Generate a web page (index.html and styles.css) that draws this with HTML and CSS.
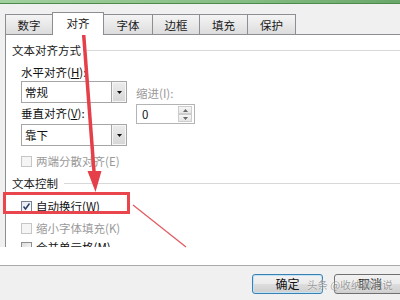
FILE: index.html
```html
<!DOCTYPE html>
<html lang="zh-CN">
<head>
<meta charset="utf-8">
<title>设置单元格格式</title>
<link rel="stylesheet" href="styles.css">
</head>
<body>
<div class="window">
  <div class="titlebar"></div>
  <div class="tabstrip">
    <div class="tabs">
      <div class="tab w48">数字</div>
      <div class="tab active w52">对齐</div>
      <div class="tab w50">字体</div>
      <div class="tab w48">边框</div>
      <div class="tab w49">填充</div>
      <div class="tab w49">保护</div>
    </div>
  </div>
  <div class="panel">
    <div class="group-title">文本对齐方式</div>
    <div class="align-block">
      <div class="col-left">
        <div class="label">水平对齐(<u>H</u>):</div>
        <div class="combo">
          <div class="val">常规</div>
          <div class="drop"><svg width="5" height="3" viewBox="0 0 5 3"><polygon points="0,0 5,0 2.5,3" fill="#111"/></svg></div>
        </div>
        <div class="label gap2">垂直对齐(<u>V</u>):</div>
        <div class="combo gap3">
          <div class="val">靠下</div>
          <div class="drop"><svg width="5" height="3" viewBox="0 0 5 3"><polygon points="0,0 5,0 2.5,3" fill="#111"/></svg></div>
        </div>
      </div>
      <div class="col-right">
        <div class="label disabled">缩进(I):</div>
        <div class="spin">
          <div class="val">0</div>
          <div class="arrows">
            <span><svg width="5" height="3" viewBox="0 0 5 3"><polygon points="0,3 5,3 2.5,0" fill="#666"/></svg></span>
            <span><svg width="5" height="3" viewBox="0 0 5 3"><polygon points="0,0 5,0 2.5,3" fill="#666"/></svg></span>
          </div>
        </div>
      </div>
    </div>
    <div class="check disabled m7"><span class="box"></span><span>两端分散对齐(E)</span></div>
    <div class="group-title m6">文本控制</div>
    <div class="check m7"><span class="box checked"><svg width="9" height="9" viewBox="0 0 9 9"><polyline points="1.5,4.5 3.5,7 7.5,1.5" fill="none" stroke="#2a3f6a" stroke-width="1.5"/></svg></span><span>自动换行(<u>W</u>)</span></div>
    <div class="check disabled m6"><span class="box"></span><span>缩小字体填充(K)</span></div>
    <div class="check m3"><span class="box"></span><span>合并单元格(M)</span></div>
  </div>
  <div class="band"></div>
  <div class="footer">
    <div class="btn primary">确定</div>
    <div class="btn">取消</div>
  </div>
  <svg class="annot" width="400" height="300" viewBox="0 0 400 300">
    <line x1="82.5" y1="19" x2="94.2" y2="174" stroke="#e5404a" stroke-width="3.5"/>
    <polygon points="87.5,171 101.5,171 95.5,192" fill="#e5404a"/>
    <rect x="4.5" y="193.5" width="124" height="19" fill="none" stroke="#e8454d" stroke-width="3"/>
    <line x1="133" y1="205" x2="186" y2="247" stroke="#e25c63" stroke-width="1.3"/>
  </svg>
  <div class="watermark">头条 @收纳聊职说</div>
</div>
</body>
</html>
```

FILE: styles.css
```css
* { box-sizing: border-box; }
html, body { margin: 0; padding: 0; }
body {
  font-family: "Noto Sans CJK SC", "Noto Sans", sans-serif;
  font-size: 12px;
  color: #111;
}
.window {
  position: relative;
  width: 400px;
  height: 300px;
  overflow: hidden;
  background: #f0f0f0;
}
.titlebar {
  height: 4px;
  background: linear-gradient(to right, #a3d09f, #86bd84 60%, #6aa669);
  border-bottom: 1.5px solid #4d8b4d;
}
.tabstrip {
  padding: 8px 0 0 5px;
}
.tabs {
  display: flex;
  align-items: flex-end;
  height: 22px;
}
.tab {
  height: 20px;
  border: 1px solid #8c8e94;
  border-bottom: none;
  margin-left: -1px;
  background: linear-gradient(#f4f4f4, #e9e9e9 50%, #dcdcdc);
  text-align: center;
  line-height: 20px;
  font-size: 11.5px;
  color: #1a1a1a;
}
.tab:first-child { margin-left: 0; }
.w48 { width: 48px; }
.w49 { width: 49px; }
.w50 { width: 50px; }
.w52 { width: 52px; }
.tab.active {
  height: 23px;
  margin-bottom: -1px;
  background: #fff;
  line-height: 21px;
  position: relative;
  z-index: 1;
}
.panel {
  height: 213px;
  margin-left: 5px;
  border-top: 1px solid #8c8e94;
  border-left: 1px solid #8c8e94;
  background: #fff;
  padding: 7px 0 0 6px;
  overflow: hidden;
  font-size: 11.5px;
}
.group-title {
  display: flex;
  align-items: center;
  height: 16px;
  line-height: 16px;
  color: #1a1a1a;
}
.group-title::after {
  content: "";
  flex: 1;
  height: 1px;
  background: #d8d8d8;
  margin-left: 6px;
}
.align-block {
  display: flex;
  gap: 9px;
  padding-left: 9px;
  margin-top: 6px;
}
.col-left {
  width: 106px;
  display: flex;
  flex-direction: column;
}
.label {
  height: 16px;
  line-height: 16px;
  white-space: nowrap;
}
.label.disabled { color: #9a9a9a; }
.gap2 { margin-top: 2px; }
.combo {
  margin-top: 1px;
  height: 22px;
  border: 1px solid #a6a6a6;
  display: flex;
  background: #fff;
}
.combo.gap3 { margin-top: 3px; }
.combo .val {
  flex: 1;
  padding-left: 3px;
  line-height: 20px;
}
.combo .drop {
  width: 15px;
  border-left: 1px solid #a6a6a6;
  background: linear-gradient(#ececec, #d6d6d6);
  box-shadow: inset 0 0 0 1px #f6f6f6;
  display: flex;
  align-items: center;
  justify-content: center;
}
.drop svg, .arrows svg { display: block; }
.col-right {
  width: 59px;
  padding-top: 21px;
}
.spin {
  margin-top: 3px;
  height: 20px;
  border: 1px solid #b4b4b4;
  display: flex;
  background: #fff;
}
.spin .val {
  flex: 1;
  padding-left: 5px;
  line-height: 18px;
}
.spin .arrows {
  width: 14px;
  margin: 1px 2px 1px 0;
  display: flex;
  flex-direction: column;
}
.spin .arrows span {
  flex: 1;
  border: 1px solid #cdcdcd;
  background: linear-gradient(#f6f6f6, #e6e6e6);
  display: flex;
  align-items: center;
  justify-content: center;
}
.check {
  display: flex;
  align-items: center;
  gap: 4px;
  height: 16px;
  line-height: 16px;
  padding-left: 9px;
  white-space: nowrap;
}
.check.disabled { color: #9a9a9a; }
.m3 { margin-top: 3px; }
.m6 { margin-top: 6px; }
.m7 { margin-top: 7px; }
.box {
  width: 11px;
  height: 11px;
  border: 1px solid #8f8f8f;
  background: linear-gradient(135deg, #dedede, #fbfbfb);
  display: flex;
  align-items: center;
  justify-content: center;
}
.check.disabled .box {
  border-color: #c6c6c6;
  background: #f5f5f5;
}
.box.checked { border-color: #7a8394; background: linear-gradient(135deg, #e4e8ee, #ffffff); }
.band {
  height: 18px;
  background: #fff;
}
.footer {
  border-top: 1px solid #a9a9a9;
  height: 35px;
  display: flex;
  gap: 11px;
  padding: 8px 0 0 252px;
}
.btn {
  flex: none;
  width: 72px;
  height: 20px;
  border: 1px solid #707070;
  border-radius: 3px;
  background: linear-gradient(#f2f2f2, #ebebeb 50%, #dddddd 50%, #cfcfcf);
  text-align: center;
  line-height: 18px;
  font-size: 12px;
  color: #111;
}
.btn.primary {
  width: 71px;
  border-color: #3c7fb1;
  box-shadow: inset 0 0 0 1px #bfe3f7;
}
.annot {
  position: absolute;
  left: 0;
  top: 0;
  pointer-events: none;
}
.watermark {
  position: absolute;
  left: 307px;
  top: 277px;
  font-size: 10.5px;
  line-height: 16px;
  color: rgba(80, 80, 80, 0.55);
  text-shadow: 0 0 2px #fff;
  white-space: nowrap;
}
```
